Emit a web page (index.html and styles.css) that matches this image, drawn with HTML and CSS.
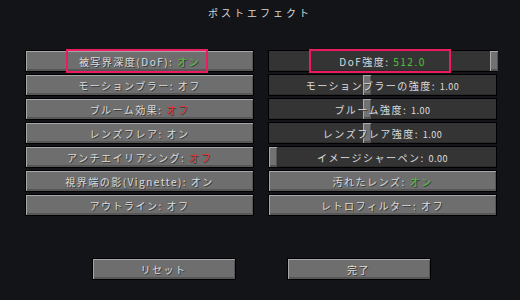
FILE: index.html
```html
<!DOCTYPE html>
<html lang="ja">
<head>
    <meta charset="UTF-8">
    <title>ポストエフェクト</title>
    <link rel="stylesheet" href="styles.css">
</head>
<body>
    <div class="title">ポストエフェクト</div>

    <div class="options">
        <div class="btn"><span class="label">被写界深度(DoF): <span class="on">オン</span></span><div class="mark"></div></div>
        <div class="slider"><div class="knob" style="left: 221px"></div><span class="label">DoF強度: <span class="on">512.0</span></span><div class="mark"></div></div>

        <div class="btn"><span class="label">モーションブラー: オフ</span></div>
        <div class="slider"><div class="knob" style="left: 94px"></div><span class="label">モーションブラーの強度: <span class="num">1.00</span></span></div>

        <div class="btn"><span class="label">ブルーム効果: <span class="off">オフ</span></span></div>
        <div class="slider"><div class="knob" style="left: 94px"></div><span class="label">ブルーム強度: <span class="num">1.00</span></span></div>

        <div class="btn"><span class="label">レンズフレア: オン</span></div>
        <div class="slider"><div class="knob" style="left: 94px"></div><span class="label">レンズフレア強度: <span class="num">1.00</span></span></div>

        <div class="btn"><span class="label">アンチエイリアシング: <span class="off">オフ</span></span></div>
        <div class="slider"><div class="knob" style="left: 0px"></div><span class="label">イメージシャーペン: <span class="num">0.00</span></span></div>

        <div class="btn"><span class="label">視界端の影(Vignette): オン</span></div>
        <div class="btn"><span class="label">汚れたレンズ: <span class="on">オン</span></span></div>

        <div class="btn"><span class="label">アウトライン: オフ</span></div>
        <div class="btn"><span class="label">レトロフィルター: オフ</span></div>
    </div>

    <div class="footer">
        <div class="btn wide"><span class="label">リセット</span></div>
        <div class="btn wide"><span class="label">完了</span></div>
    </div>
</body>
</html>
```

FILE: styles.css
```css
body {
    margin: 0;
    width: 520px;
    height: 300px;
    background: #121418;
    font-family: "Noto Sans CJK JP", "DejaVu Sans", sans-serif;
    color: #dcdcdc;
    overflow: hidden;
}

.title {
    text-align: center;
    font-size: 10px;
    letter-spacing: 3px;
    padding-top: 5px;
    height: 50px;
    box-sizing: border-box;
    color: #d8d8d8;
}

.options {
    display: grid;
    grid-template-columns: 229px 229px;
    column-gap: 14px;
    row-gap: 2px;
    padding-left: 25px;
}

.btn,
.slider {
    position: relative;
    height: 22px;
    box-sizing: border-box;
    border: 1px solid #000;
    display: flex;
    align-items: center;
    justify-content: center;
    font-size: 10px;
    letter-spacing: 1.5px;
    text-shadow: 1px 1px 0 #3a3a3a;
}

.btn {
    background: #6e6e6e;
    box-shadow: inset 1px 1px 0 #a6a6a6, inset -1px -2px 0 #565656;
}

.slider {
    background: #343434;
    box-shadow: inset 0 -1px 0 #2a2a2a;
}

.label {
    position: relative;
    white-space: pre;
}

.num {
    font-size: 9px;
    letter-spacing: 0.5px;
}

.knob {
    position: absolute;
    top: 0;
    bottom: 0;
    width: 8px;
    background: #727272;
    box-shadow: inset 1px 1px 0 #a8a8a8, inset -1px -2px 0 #525252;
}

.on {
    color: #4fc43a;
}

.off {
    color: #e83030;
}

.mark {
    position: absolute;
    top: -2px;
    bottom: -2px;
    left: 40px;
    width: 142px;
    border: 2px solid #ec1a60;
    box-sizing: border-box;
}

.footer {
    display: flex;
    justify-content: center;
    gap: 51px;
    margin-top: 42px;
    padding-left: 2px;
}

.btn.wide {
    width: 144px;
}
```
